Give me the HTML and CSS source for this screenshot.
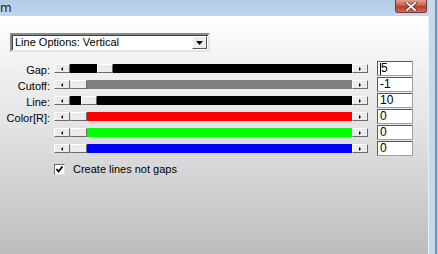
FILE: index.html
```html
<!DOCTYPE html>
<html>
<head>
<meta charset="utf-8">
<link rel="stylesheet" href="styles.css">
</head>
<body>
<div class="window">
  <div class="main">
    <div class="titlebar">
      <span class="title">m</span>
      <div class="close">
        <svg width="14" height="9" viewBox="0 0 14 9"><path d="M3 1 L11 8 M11 1 L3 8" stroke="#5a2a20" stroke-width="3.2" stroke-linecap="square"/><path d="M3 1 L11 8 M11 1 L3 8" stroke="#ffffff" stroke-width="1.8" stroke-linecap="square"/></svg>
      </div>
    </div>
    <div class="client">
      <div class="dropdown">
        <span class="dd-text">Line Options: Vertical</span>
        <span class="dd-btn"><svg width="7" height="4" viewBox="0 0 7 4"><path d="M0 0 H7 L3.5 4 Z" fill="#000"/></svg></span>
      </div>
      <div class="rows">
        <div class="row">
          <span class="label">Gap:</span>
          <div class="sb">
            <span class="arrow"><i class="tri-l"></i></span>
            <div class="track black"><span class="thumb" style="margin-left:27px"></span></div>
            <span class="arrow"><i class="tri-r"></i></span>
          </div>
          <div class="input"><span class="caret"></span>5</div>
        </div>
        <div class="row">
          <span class="label">Cutoff:</span>
          <div class="sb">
            <span class="arrow"><i class="tri-l"></i></span>
            <div class="track gray"><span class="thumb first"></span></div>
            <span class="arrow"><i class="tri-r"></i></span>
          </div>
          <div class="input">-1</div>
        </div>
        <div class="row">
          <span class="label">Line:</span>
          <div class="sb">
            <span class="arrow"><i class="tri-l"></i></span>
            <div class="track black"><span class="thumb" style="margin-left:11px"></span></div>
            <span class="arrow"><i class="tri-r"></i></span>
          </div>
          <div class="input">10</div>
        </div>
        <div class="row">
          <span class="label">Color[R]:</span>
          <div class="sb">
            <span class="arrow"><i class="tri-l"></i></span>
            <div class="track red"><span class="thumb first"></span></div>
            <span class="arrow"><i class="tri-r"></i></span>
          </div>
          <div class="input">0</div>
        </div>
        <div class="row">
          <span class="label"></span>
          <div class="sb">
            <span class="arrow"><i class="tri-l"></i></span>
            <div class="track green"><span class="thumb first"></span></div>
            <span class="arrow"><i class="tri-r"></i></span>
          </div>
          <div class="input">0</div>
        </div>
        <div class="row">
          <span class="label"></span>
          <div class="sb">
            <span class="arrow"><i class="tri-l"></i></span>
            <div class="track blue"><span class="thumb first"></span></div>
            <span class="arrow"><i class="tri-r"></i></span>
          </div>
          <div class="input">0</div>
        </div>
      </div>
      <label class="check">
        <span class="box"><svg width="9" height="9" viewBox="0 0 9 9"><path d="M1.5 4 L3.5 6.5 L7.5 1.5" stroke="#000" stroke-width="1.8" fill="none"/></svg></span>
        <span class="check-text">Create lines not gaps</span>
      </label>
    </div>
  </div>
  <div class="frame-right"></div>
</div>
</body>
</html>
```

FILE: styles.css
```css
html, body {
  margin: 0;
  padding: 0;
}
body {
  width: 438px;
  height: 254px;
  overflow: hidden;
  font-family: "Liberation Sans", Arial, sans-serif;
  font-size: 11px;
  color: #000;
}
.window {
  display: flex;
  width: 438px;
  height: 254px;
}
.main {
  width: 429px;
  display: flex;
  flex-direction: column;
}
.titlebar {
  height: 16px;
  display: flex;
  align-items: flex-start;
  justify-content: space-between;
  background: linear-gradient(to bottom, #b4cce6, #c0d6ee);
}
.title {
  font-family: "DejaVu Sans", sans-serif;
  font-size: 12px;
  line-height: 14px;
  color: #1a1a1a;
  padding-top: 1px;
}
.close {
  width: 30px;
  height: 12px;
  margin-right: 2px;
  border: 1px solid #6e3a33;
  border-top: none;
  border-radius: 0 0 3px 3px;
  background: linear-gradient(to bottom, #dfa094 0%, #c9614f 45%, #b83a28 55%, #d2705c 100%);
  display: flex;
  align-items: center;
  justify-content: center;
}
.close svg {
  display: block;
}
.client {
  flex: 1;
  display: flex;
  flex-direction: column;
  background: linear-gradient(to bottom, #ffffff 0px, #f3f3f3 40px, #e6e6e6 100px, #d6d6d6 155px, #bdbdbd 238px);
  border-right: 1px solid #e8eef5;
}
.dropdown {
  margin: 17px 0 0 10px;
  width: 196px;
  height: 15px;
  display: flex;
  align-items: stretch;
  background: #fff;
  border-top: 2px solid #8a8a8a;
  border-left: 2px solid #8a8a8a;
  border-right: 2px solid #e4e4e4;
  border-bottom: 2px solid #e4e4e4;
  box-shadow: inset 1px 1px 0 #404040;
}
.dd-text {
  flex: 1;
  padding-left: 3px;
  line-height: 15px;
}
.dd-btn {
  width: 15px;
  margin: 1px;
  background: #ececec;
  border-top: 1px solid #fff;
  border-left: 1px solid #fff;
  border-right: 1px solid #555;
  border-bottom: 1px solid #555;
  box-sizing: border-box;
  display: flex;
  align-items: center;
  justify-content: center;
}
.dd-btn svg {
  display: block;
}
.rows {
  margin-top: 9px;
  display: flex;
  flex-direction: column;
}
.row {
  height: 16px;
  display: flex;
  align-items: flex-start;
}
.label {
  width: 50px;
  text-align: right;
  line-height: 12px;
  padding-top: 3px;
  flex-shrink: 0;
}
.sb {
  margin-left: 4px;
  margin-top: 3px;
  width: 314px;
  height: 9px;
  display: flex;
}
.arrow {
  width: 16px;
  height: 9px;
  box-sizing: border-box;
  background: #ececec;
  border-top: 1px solid #fff;
  border-left: 1px solid #fff;
  border-right: 1px solid #6a6a6a;
  border-bottom: 1px solid #6a6a6a;
  display: flex;
  align-items: center;
  justify-content: center;
  flex-shrink: 0;
}
.tri-l {
  width: 0;
  height: 0;
  border-top: 2px solid transparent;
  border-bottom: 2px solid transparent;
  border-right: 2px solid #000;
}
.tri-r {
  width: 0;
  height: 0;
  border-top: 2px solid transparent;
  border-bottom: 2px solid transparent;
  border-left: 2px solid #000;
}
.track {
  flex: 1;
  height: 9px;
  display: flex;
}
.track.black { background: #000; }
.track.gray { background: #808080; }
.track.red { background: #ff0000; }
.track.green { background: #00ff00; }
.track.blue { background: #0000ff; }
.thumb {
  width: 16px;
  height: 9px;
  box-sizing: border-box;
  background: #ececec;
  border-top: 1px solid #fff;
  border-left: 1px solid #fff;
  border-right: 1px solid #6a6a6a;
  border-bottom: 1px solid #6a6a6a;
  flex-shrink: 0;
}
.thumb.first {
  width: 17px;
  border-left-color: #e0e0e0;
}
.input {
  margin-left: 9px;
  width: 36px;
  height: 15px;
  box-sizing: border-box;
  background: #fff;
  border: 1px solid #5a5a5a;
  border-right-color: #a0a0a0;
  border-bottom-color: #a0a0a0;
  font-size: 12px;
  line-height: 13px;
  padding-left: 2px;
  display: flex;
  align-items: center;
}
.caret {
  width: 1px;
  height: 12px;
  background: #000;
}
.check {
  margin: 6px 0 0 54px;
  display: flex;
  align-items: center;
  height: 12px;
}
.box {
  width: 11px;
  height: 11px;
  box-sizing: border-box;
  background: #fff;
  border-top: 1px solid #6a6a6a;
  border-left: 1px solid #6a6a6a;
  border-right: 1px solid #e0e0e0;
  border-bottom: 1px solid #e0e0e0;
  display: flex;
  align-items: center;
  justify-content: center;
}
.box svg {
  display: block;
}
.check-text {
  margin-left: 8px;
  line-height: 12px;
}
.frame-right {
  width: 9px;
  background: linear-gradient(to right, #c6daef 0, #c6daef 6px, #6f93ba 6px, #6f93ba 8px, #b8cfe7 8px);
}
```
